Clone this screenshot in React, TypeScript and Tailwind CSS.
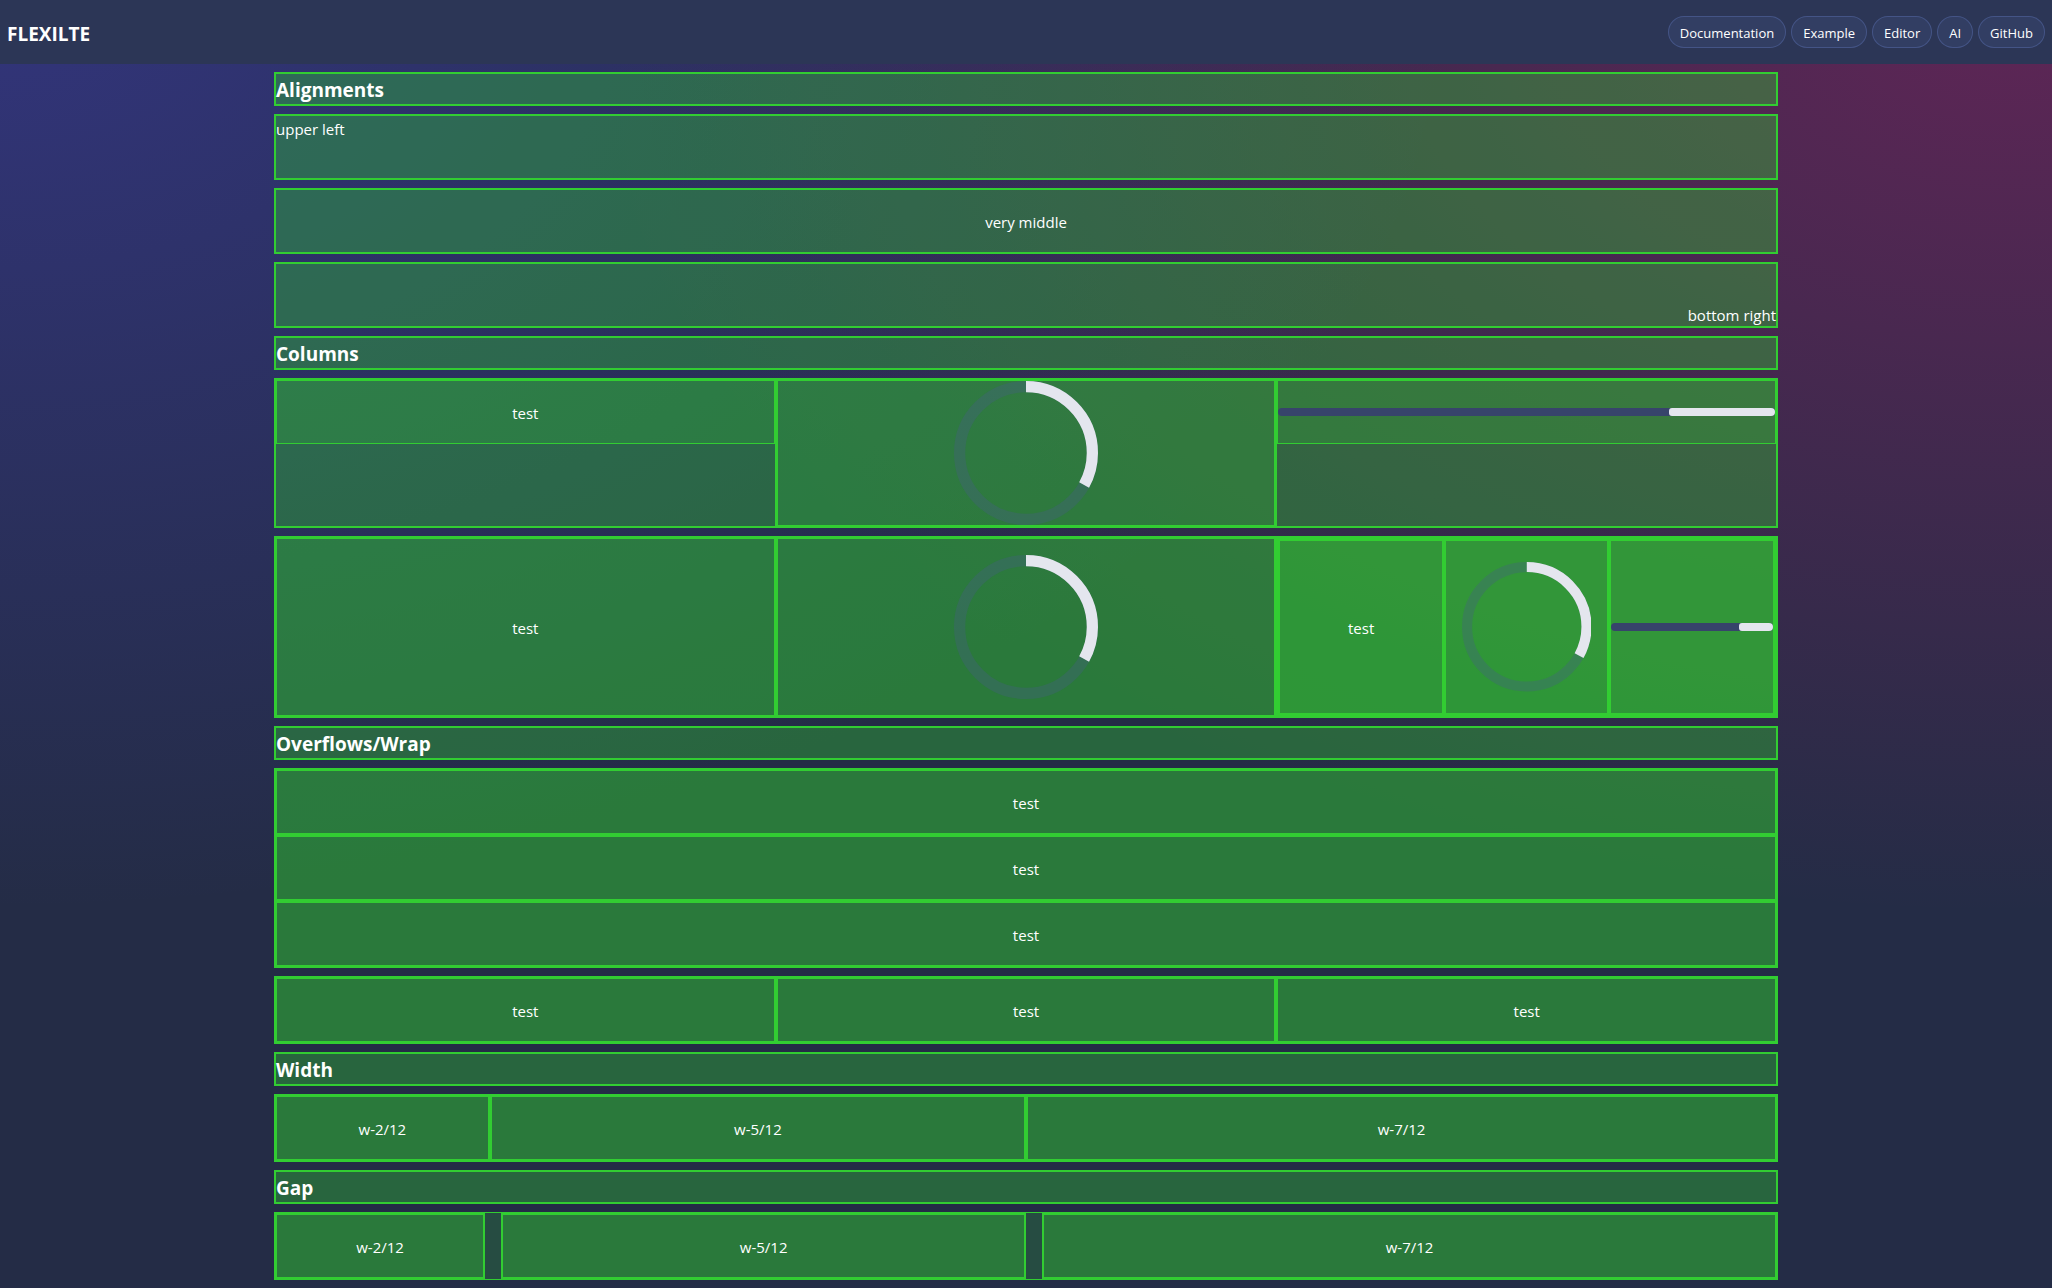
import type { ReactNode } from "react";

const layer = "border border-[#32cd32] bg-[#32cd32]/20";

type Align = "start" | "center" | "end";

const alignment: Record<Align, string> = {
  start: "items-start justify-start",
  center: "items-center justify-center",
  end: "items-end justify-end",
};

function Group({ children, className = "" }: { children: ReactNode; className?: string }) {
  return <div className={`flex ${layer} ${className}`}>{children}</div>;
}

function Column({ children, className = "flex-1" }: { children: ReactNode; className?: string }) {
  return <div className={`flex min-w-0 flex-col ${layer} ${className}`}>{children}</div>;
}

function Cell({ children, className = "" }: { children: ReactNode; className?: string }) {
  return (
    <div className={`flex min-h-16 items-center justify-center ${layer} ${className}`}>{children}</div>
  );
}

function Label({ children }: { children: ReactNode }) {
  return <p className="pt-0.5 text-[15px]/[22px]">{children}</p>;
}

function Heading({ children }: { children: ReactNode }) {
  return (
    <Group>
      <h2 className={`w-full pt-0.5 text-[19px]/[28px] font-bold ${layer}`}>{children}</h2>
    </Group>
  );
}

function Aligned({ align, children }: { align: Align; children: ReactNode }) {
  return (
    <Group>
      <div className={`flex min-h-16 w-full ${alignment[align]} ${layer}`}>
        <Label>{children}</Label>
      </div>
    </Group>
  );
}

function ProgressRadial({ className = "" }: { className?: string }) {
  return (
    <svg
      viewBox="0 0 512 512"
      role="progressbar"
      aria-label="Progress"
      aria-valuenow={33}
      className={`aspect-square w-36 ${className}`}
    >
      <circle cx="256" cy="256" r="236" fill="none" strokeWidth="40" className="stroke-[#495a8f]/30" />
      <circle
        cx="256"
        cy="256"
        r="236"
        fill="none"
        strokeWidth="40"
        pathLength="100"
        strokeDasharray="33 67"
        transform="rotate(-90 256 256)"
        className="stroke-[#e4e6ee]"
      />
    </svg>
  );
}

function ProgressBar() {
  return (
    <div
      role="progressbar"
      aria-label="Loading"
      className="flex h-2 w-full justify-end overflow-hidden rounded-full bg-[#37446b]"
    >
      <div className="h-full w-[21.3%] rounded-l-[3px] bg-[#e4e6ee]" />
    </div>
  );
}

const links = ["Documentation", "Example", "Editor", "AI", "GitHub"];

const widths = [
  { label: "w-2/12", className: "w-2/12" },
  { label: "w-5/12", className: "w-5/12" },
  { label: "w-7/12", className: "w-7/12" },
];

const repeated = [0, 1, 2];

export default function App() {
  return (
    <div className="min-h-screen bg-[#242c46] bg-[radial-gradient(at_0%_0%,rgba(79,70,229,0.33)_0px,transparent_50%),radial-gradient(at_98%_1%,rgba(212,25,118,0.33)_0px,transparent_50%)] font-['Open_Sans','Noto_Sans',sans-serif] text-white">
      <header className="flex h-16 items-center justify-between bg-[#2c3656] px-[7px]">
        <a href="#" className="pt-1 text-[19px]/[28px] font-bold">
          FLEXILTE
        </a>
        <nav className="flex gap-[5px]">
          {links.map((link) => (
            <a
              key={link}
              href="#"
              className="flex h-8 items-center rounded-full border border-[#495a8f]/80 bg-[#323e63] px-[11px] pt-0.5 text-[13px]/[20px]"
            >
              {link}
            </a>
          ))}
        </nav>
      </header>

      <main className="mx-auto flex max-w-[1536px] flex-col gap-2 px-4 py-2">
        <Heading>Alignments</Heading>
        <Aligned align="start">upper left</Aligned>
        <Aligned align="center">very middle</Aligned>
        <Aligned align="end">bottom right</Aligned>

        <Heading>Columns</Heading>
        <Group>
          <Column>
            <Cell>
              <Label>test</Label>
            </Cell>
          </Column>
          <Column>
            <Cell>
              <ProgressRadial />
            </Cell>
          </Column>
          <Column>
            <Cell>
              <ProgressBar />
            </Cell>
          </Column>
        </Group>
        <Group>
          <Column>
            <Cell className="grow">
              <Label>test</Label>
            </Cell>
          </Column>
          <Column>
            <Cell className="grow py-4">
              <ProgressRadial />
            </Cell>
          </Column>
          <Column>
            <Group className="grow">
              <Column>
                <Cell className="grow">
                  <Label>test</Label>
                </Cell>
              </Column>
              <Column>
                <Cell className="grow px-4">
                  <ProgressRadial className="min-w-0" />
                </Cell>
              </Column>
              <Column>
                <Cell className="grow">
                  <ProgressBar />
                </Cell>
              </Column>
            </Group>
          </Column>
        </Group>

        <Heading>Overflows/Wrap</Heading>
        <Group className="flex-wrap">
          {repeated.map((i) => (
            <Column key={i} className="w-full">
              <Cell>
                <Label>test</Label>
              </Cell>
            </Column>
          ))}
        </Group>
        <Group>
          {repeated.map((i) => (
            <Column key={i}>
              <Cell>
                <Label>test</Label>
              </Cell>
            </Column>
          ))}
        </Group>

        <Heading>Width</Heading>
        <Group>
          {widths.map(({ label, className }) => (
            <Column key={label} className={className}>
              <Cell>
                <Label>{label}</Label>
              </Cell>
            </Column>
          ))}
        </Group>

        <Heading>Gap</Heading>
        <Group className="gap-4">
          {widths.map(({ label, className }) => (
            <Column key={label} className={className}>
              <Cell>
                <Label>{label}</Label>
              </Cell>
            </Column>
          ))}
        </Group>
      </main>
    </div>
  );
}
